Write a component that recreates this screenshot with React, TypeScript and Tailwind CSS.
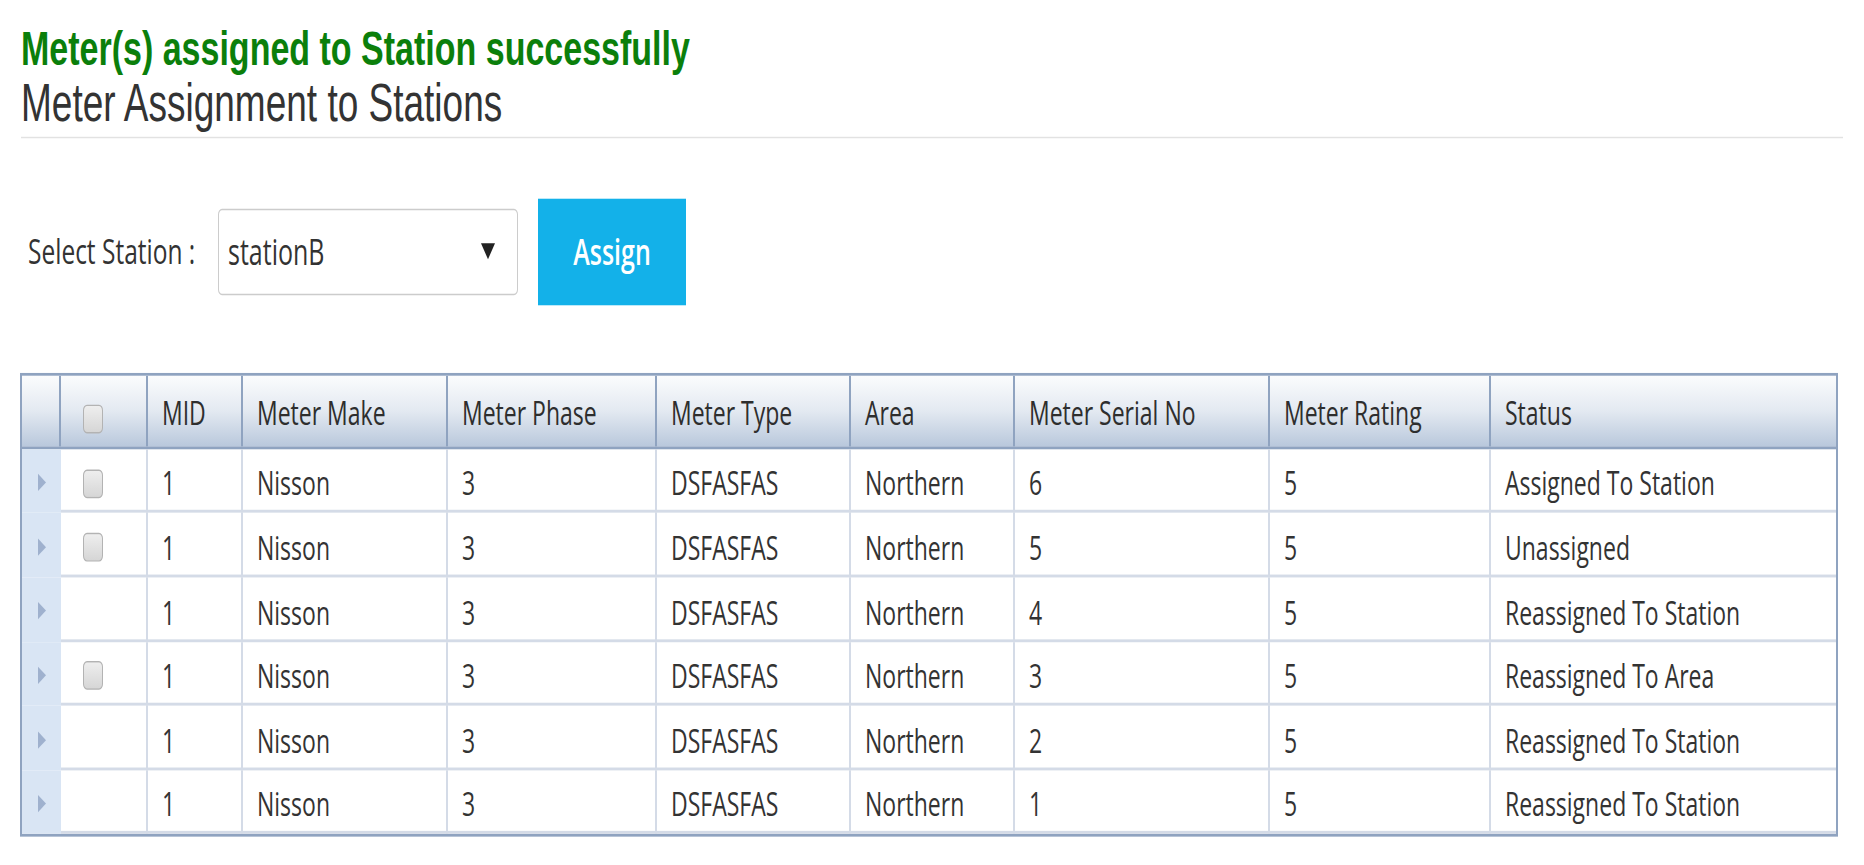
import { Fragment } from "react";

interface MeterRow {
	mid: string;
	make: string;
	phase: string;
	type: string;
	area: string;
	serial: string;
	rating: string;
	status: string;
	selectable: boolean;
}

const meters: MeterRow[] = [
	{ mid: "1", make: "Nisson", phase: "3", type: "DSFASFAS", area: "Northern", serial: "6", rating: "5", status: "Assigned To Station", selectable: true },
	{ mid: "1", make: "Nisson", phase: "3", type: "DSFASFAS", area: "Northern", serial: "5", rating: "5", status: "Unassigned", selectable: true },
	{ mid: "1", make: "Nisson", phase: "3", type: "DSFASFAS", area: "Northern", serial: "4", rating: "5", status: "Reassigned To Station", selectable: false },
	{ mid: "1", make: "Nisson", phase: "3", type: "DSFASFAS", area: "Northern", serial: "3", rating: "5", status: "Reassigned To Area", selectable: true },
	{ mid: "1", make: "Nisson", phase: "3", type: "DSFASFAS", area: "Northern", serial: "2", rating: "5", status: "Reassigned To Station", selectable: false },
	{ mid: "1", make: "Nisson", phase: "3", type: "DSFASFAS", area: "Northern", serial: "1", rating: "5", status: "Reassigned To Station", selectable: false },
];

const columns = ["MID", "Meter Make", "Meter Phase", "Meter Type", "Area", "Meter Serial No", "Meter Rating", "Status"];

const gridCols = "grid grid-cols-[39px_87px_95px_205px_209px_194px_164px_255px_221px_1fr]";

function CheckBox() {
	return (
		<span className="block h-[20px] w-[20px] rounded-[4px] border border-[#b3b3b3] bg-linear-to-b from-[#eeeeee] to-[#d6d6d6]" />
	);
}

export default function App() {
	return (
		<div className="h-[865px] w-full overflow-hidden bg-white">
			<div className="w-full origin-top-left scale-y-[1.44] px-[21px] pt-[16px]">
				{/* messages */}
				<div className="font-['Liberation_Sans',Arial,sans-serif]">
					<h1 className="text-[34px] leading-[34px] font-bold text-[#0b7f0b]">
						Meter(s) assigned to Station successfully
					</h1>
					<h2 className="mt-[3px] border-b-[1.5px] border-[#e2e2e2] pb-[5px] text-[37px] leading-[37px] font-normal text-[#333]">
						Meter Assignment to Stations
					</h2>
				</div>

				{/* station picker */}
				<div className="mt-[42px] flex items-center pl-[7px] font-['Open_Sans',sans-serif]">
					<label className="w-[190px] text-[24.5px] text-[#333]">Select Station :</label>
					<div className="flex h-[60.5px] w-[300px] items-center justify-between rounded-[4px] border border-[#cccccc] pl-[9px] pr-[22px]">
						<span className="text-[25px] text-[#333]">stationB</span>
						<span className="block h-0 w-0 border-x-[7.5px] border-t-[11px] border-x-transparent border-t-[#222]" />
					</div>
					<button className="ml-[20px] flex h-[73.6px] w-[148px] items-center justify-center bg-[#13b1e9] text-[25px] font-semibold text-white">
						Assign
					</button>
				</div>

				{/* meters grid */}
				<div className="-ml-px mt-[47px] w-[1818px] border-2 border-[#8fa3c0] font-['Open_Sans',sans-serif] text-[23px] text-[#333]">
					<div className={`${gridCols} h-[51.3px] border-b-2 border-[#8fa3c0] bg-linear-to-b from-[#fbfcfd] via-[#e3e9f1] to-[#b9c8dc] text-[#2e2e2e]`}>
						<div className="border-r-2 border-[#8fa3c0]" />
						<div className="flex items-center border-r-2 border-[#8fa3c0] pl-[22px]">
							<div className="mt-[12.5px]">
								<CheckBox />
							</div>
						</div>
						{columns.map((col, i) => (
							<div
								key={col}
								className={`flex items-center pl-[14px] pt-[2px] whitespace-nowrap ${i < columns.length - 1 ? "border-r-2 border-[#8fa3c0]" : ""}`}>
								{col}
							</div>
						))}
					</div>
					{meters.map((m, idx) => {
						const values = [m.mid, m.make, m.phase, m.type, m.area, m.serial, m.rating, m.status];
						return (
							<div key={idx} className={`${gridCols} h-[44.6px]`}>
								<div className="flex items-center justify-center bg-[#d9e5f4] pt-[2px]">
									<span className="block h-0 w-0 border-y-[6px] border-l-[8px] border-y-transparent border-l-[#9fb1ce]" />
								</div>
								<div className="flex items-center border-b-2 border-r-2 border-[#d4dbe7] pl-[22px] pt-[5px]">
									{m.selectable && <CheckBox />}
								</div>
								{values.map((v, i) => (
									<Fragment key={i}>
										<div
											className={`flex items-center border-b-2 border-[#d4dbe7] pl-[14px] pt-[5px] whitespace-nowrap ${i < values.length - 1 ? "border-r-2" : ""}`}>
											{v}
										</div>
									</Fragment>
								))}
							</div>
						);
					})}
				</div>
			</div>
		</div>
	);
}
